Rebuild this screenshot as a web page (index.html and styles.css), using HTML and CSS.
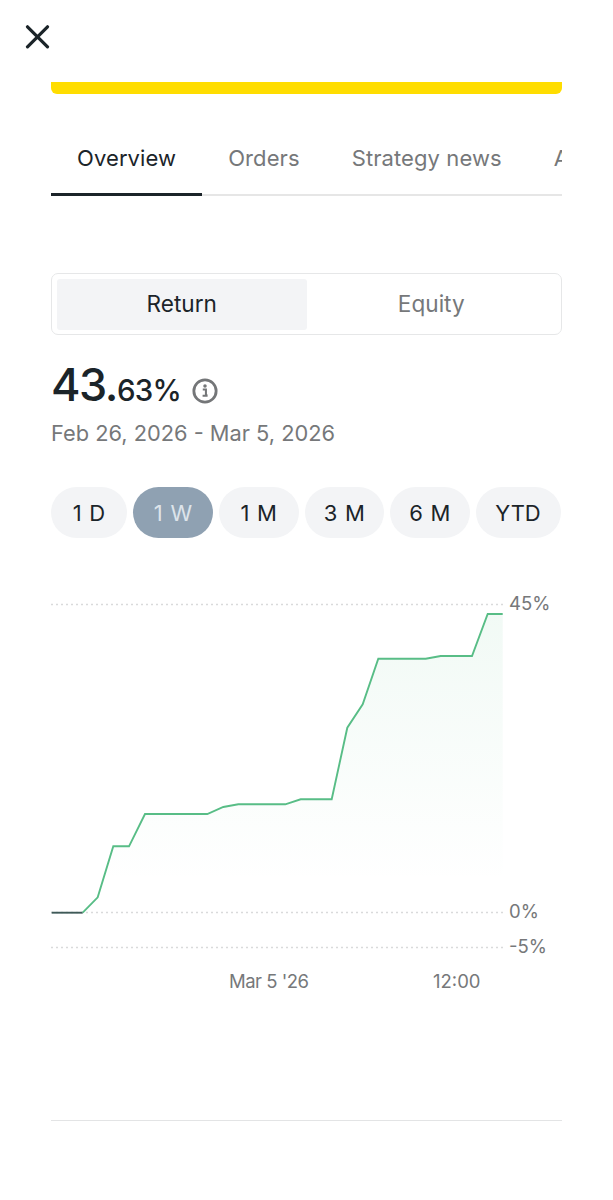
FILE: index.html
```html
<!DOCTYPE html>
<html lang="en">

<head>
    <meta charset="UTF-8">
    <meta name="viewport" content="width=device-width, initial-scale=1.0">
    <title>Strategy overview</title>
    <link rel="stylesheet" href="styles.css">
</head>

<body>
    <header class="top">
        <svg class="close" width="26" height="24" viewBox="0 0 26 24">
            <path d="M2.5 1.8 L22.5 21.8 M22.5 1.8 L2.5 21.8" stroke="#1b2429" stroke-width="3.2" stroke-linecap="round" fill="none" />
        </svg>
    </header>

    <main class="content">
        <div class="banner"></div>

        <nav class="tabs">
            <a class="tab active">Overview</a>
            <a class="tab">Orders</a>
            <a class="tab">Strategy news</a>
            <a class="tab">About</a>
        </nav>

        <div class="segment">
            <div class="segment-item active">Return</div>
            <div class="segment-item">Equity</div>
        </div>

        <div class="value">
            <span class="value-big">43.</span><span class="value-small">63%</span>
            <svg class="info" width="26" height="26" viewBox="0 0 28 28">
                <circle cx="14" cy="14" r="12" stroke="#747678" stroke-width="3" fill="none" />
                <circle cx="14" cy="8.6" r="1.9" fill="#747678" />
                <path d="M11.6 12.4 H15 V18.6 H16.6 M11.4 19.2 H16.8" stroke="#747678" stroke-width="2.2" fill="none" />
            </svg>
        </div>
        <div class="dates">Feb 26, 2026 - Mar 5, 2026</div>

        <div class="ranges">
            <div class="range r-1d">1 D</div>
            <div class="range r-sel">1 W</div>
            <div class="range">1 M</div>
            <div class="range">3 M</div>
            <div class="range">6 M</div>
            <div class="range r-ytd">YTD</div>
        </div>

        <svg class="chart" width="511" height="410" viewBox="51 590 511 410">
            <defs>
                <linearGradient id="areaFill" x1="0" y1="0" x2="0" y2="1">
                    <stop offset="0" stop-color="#55bd85" stop-opacity="0.08" />
                    <stop offset="0.9" stop-color="#55bd85" stop-opacity="0" />
                </linearGradient>
            </defs>
            <path d="M82.7 912.7 L97.7 897.3 L113.3 846.3 H129 L145 814 H207.3 L223.3 807 L238.3 804.3 H285.3 L300.7 799.3 H331.7 L347.3 727.7 L362.7 704.3 L378.3 658.7 H425.7 L440.7 656 H472 L487.7 614 H502.7 V912.7 Z" fill="url(#areaFill)" />
            <g class="grid">
                <line x1="51" y1="604.5" x2="503" y2="604.5" />
                <line x1="51" y1="912.5" x2="503" y2="912.5" />
                <line x1="51" y1="947.5" x2="503" y2="947.5" />
            </g>
            <path d="M51.7 912.7 H82.7" stroke="#3f5a58" stroke-width="1.9" fill="none" />
            <path d="M82.7 912.7 L97.7 897.3 L113.3 846.3 H129 L145 814 H207.3 L223.3 807 L238.3 804.3 H285.3 L300.7 799.3 H331.7 L347.3 727.7 L362.7 704.3 L378.3 658.7 H425.7 L440.7 656 H472 L487.7 614 H502.7" stroke="#58bd86" stroke-width="1.9" fill="none" />
            <g class="axis">
                <text x="509" y="610">45%</text>
                <text x="509" y="918">0%</text>
                <text x="509" y="953">-5%</text>
                <text class="axis-date" x="229" y="988">Mar 5 '26</text>
                <text x="433" y="988">12:00</text>
            </g>
        </svg>

        <div class="rule"></div>
    </main>
</body>

</html>
```

FILE: styles.css
```css
body {
    font-family: Inter, "Liberation Sans", sans-serif;
    background-color: #fff;
    color: #1b2429;
    margin: 0;
    height: 1200px;
    overflow: hidden;
}

.top {
    height: 82px;
    padding: 25px 0 0 25px;
    box-sizing: border-box;
}

.close {
    display: block;
}

.content {
    width: 511px;
    margin-left: 51px;
}

.banner {
    height: 12px;
    background-color: #ffdd00;
    border-radius: 0 0 6px 6px;
}

.tabs {
    display: flex;
    overflow: hidden;
    margin-top: 37px;
    height: 65px;
}

.tab {
    flex: none;
    padding: 13px 26px 0;
    font-size: 22px;
    letter-spacing: 0.1px;
    line-height: 28px;
    color: #76787a;
    border-bottom: 2px solid #e6e6e6;
    box-sizing: border-box;
}

.tab.active {
    color: #1b2429;
    border-bottom: 3px solid #1b2429;
}

.segment {
    display: flex;
    height: 62px;
    margin-top: 77px;
    padding: 5px 5px 4px;
    border: 1.5px solid #e6e7e8;
    border-radius: 7px;
    box-sizing: border-box;
}

.segment-item {
    flex: 1;
    text-align: center;
    font-size: 22.6px;
    line-height: 49px;
    color: #76787a;
}

.segment-item.active {
    background-color: #f3f4f6;
    border-radius: 3px;
    color: #1b2429;
}

.value {
    display: flex;
    align-items: baseline;
    height: 62px;
    margin-top: 19px;
    margin-bottom: 3px;
    font-weight: 500;
    line-height: 62px;
}

.value-big {
    font-size: 45px;
    letter-spacing: -1.5px;
}

.value-small {
    font-size: 29.5px;
    letter-spacing: -0.8px;
}

.info {
    align-self: center;
    margin: 12px 0 0 11px;
}

.dates {
    font-size: 21.8px;
    line-height: 28px;
    color: #76787a;
}

.ranges {
    display: flex;
    gap: 6px;
    margin-top: 40px;
}

.range {
    width: 79.5px;
    height: 51px;
    border-radius: 26px;
    background-color: #f3f4f6;
    text-align: center;
    font-size: 22px;
    word-spacing: 1.5px;
    line-height: 53px;
}

.r-1d {
    width: 76px;
}

.r-sel {
    width: 80px;
    background-color: #8fa1b2;
    color: #dde4ea;
}

.r-ytd {
    width: 85px;
}

.chart {
    display: block;
    margin-top: 52px;
}

.grid line {
    stroke: #d9dadb;
    stroke-width: 1.5;
    stroke-dasharray: 2 3;
}

.axis text {
    font-size: 18.5px;
    fill: #76787a;
}

.axis .axis-date {
    letter-spacing: -0.5px;
}

.rule {
    height: 1px;
    margin-top: 120px;
    background-color: #e3e4e5;
}
```
